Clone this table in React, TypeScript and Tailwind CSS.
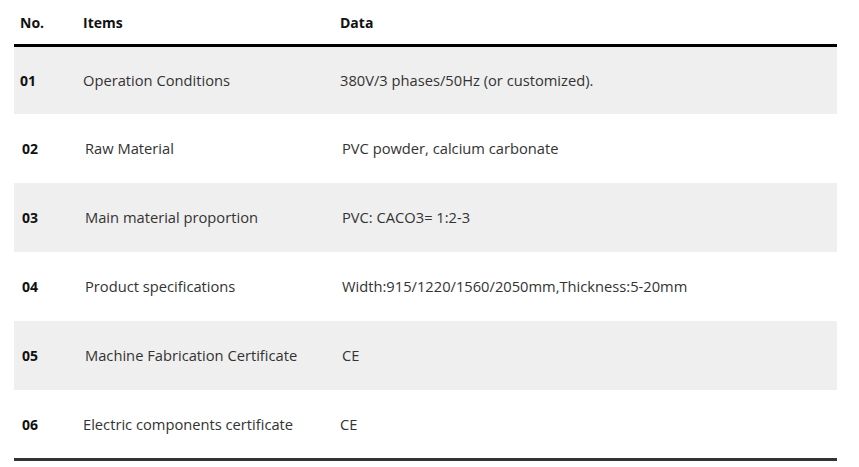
import React from 'react';

const rows = [
  { no: '01', item: 'Operation Conditions', data: '380V/3 phases/50Hz (or customized).', shift: '', h: 'h-[67px]' },
  { no: '02', item: 'Raw Material', data: 'PVC powder, calcium carbonate', shift: 'pl-[2px]', h: 'h-[69px]' },
  { no: '03', item: 'Main material proportion', data: 'PVC: CACO3= 1:2-3', shift: 'pl-[2px]', h: 'h-[69px]' },
  { no: '04', item: 'Product specifications', data: 'Width:915/1220/1560/2050mm,Thickness:5-20mm', shift: 'pl-[2px]', h: 'h-[69px]' },
  { no: '05', item: 'Machine Fabrication Certificate', data: 'CE', shift: 'pl-[2px]', h: 'h-[69px]' },
  { no: '06', item: 'Electric components certificate', data: 'CE', shift: '', h: 'h-[68px]' },
];

export default function App() {
  return (
    <div className="min-h-screen bg-white px-[14px] pr-[22px] text-[#333]" style={{ fontFamily: '"Open Sans", "Liberation Sans", sans-serif' }}>
      {/* header */}
      <div className="grid h-[44px] grid-cols-[69px_257px_1fr] items-center text-[14px] font-bold text-[#111]">
        <div className="pl-[6px]">No.</div>
        <div>Items</div>
        <div>Data</div>
      </div>
      <div className="border-t-[3px] border-black">
        {rows.map((r, i) => (
          <div
            key={r.no}
            className={`grid grid-cols-[69px_257px_1fr] items-center ${r.h} ${i % 2 === 0 ? 'bg-[#efefef]' : 'bg-white'}`}
          >
            <div className={`text-[14px] font-bold text-[#111] ${r.no === '01' ? 'pl-[6px]' : 'pl-[8px]'}`}>{r.no}</div>
            <div className={`text-[14.7px] ${r.shift}`}>{r.item}</div>
            <div className={`text-[14.7px] ${r.shift}`}>{r.data}</div>
          </div>
        ))}
      </div>
      <div className="h-[3px] bg-[#333]" />
    </div>
  );
}
